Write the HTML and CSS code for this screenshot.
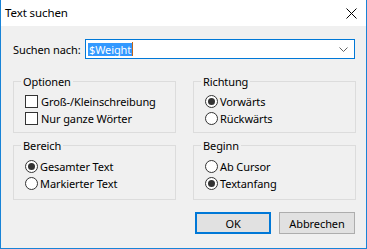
FILE: index.html
```html
<!DOCTYPE html>
<html>
<head>
<meta charset="utf-8">
<link rel="stylesheet" href="styles.css">
</head>
<body>
<div class="window">
  <div class="titlebar">
    <span class="title">Text suchen</span>
    <svg class="close" width="11" height="11" viewBox="0 0 11 11"><path d="M0.5 0.5 L10.5 10.5 M10.5 0.5 L0.5 10.5" stroke="#000" stroke-width="1" fill="none"/></svg>
  </div>
  <div class="content">
    <div class="search-row">
      <span class="label">Suchen nach:</span>
      <div class="combo">
        <span class="sel">$Weight</span><span class="caret"></span>
        <svg class="chev" width="9" height="5" viewBox="0 0 9 5"><path d="M0.5 0.5 L4.5 4.5 L8.5 0.5" stroke="#606060" stroke-width="1" fill="none"/></svg>
      </div>
    </div>
    <div class="groups">
      <fieldset class="group">
        <legend>Optionen</legend>
        <div class="opt"><span class="check"></span>Groß-/Kleinschreibung</div>
        <div class="opt"><span class="check"></span>Nur ganze Wörter</div>
      </fieldset>
      <fieldset class="group">
        <legend>Richtung</legend>
        <div class="opt"><span class="radio on"></span>Vorwärts</div>
        <div class="opt"><span class="radio"></span>Rückwärts</div>
      </fieldset>
      <fieldset class="group low">
        <legend>Bereich</legend>
        <div class="opt"><span class="radio on"></span>Gesamter Text</div>
        <div class="opt"><span class="radio"></span>Markierter Text</div>
      </fieldset>
      <fieldset class="group low">
        <legend>Beginn</legend>
        <div class="opt"><span class="radio"></span>Ab Cursor</div>
        <div class="opt"><span class="radio on"></span>Textanfang</div>
      </fieldset>
    </div>
    <div class="buttons">
      <button class="btn default">OK</button>
      <button class="btn">Abbrechen</button>
    </div>
  </div>
</div>
</body>
</html>
```
FILE: styles.css
```css
* { box-sizing: border-box; }
html, body { margin: 0; padding: 0; }
body {
  font-family: "Noto Sans", "DejaVu Sans", sans-serif;
  font-size: 11px;
  letter-spacing: -0.1px;
  color: #000;
  background: #fff;
}
.window {
  width: 367px;
  height: 249px;
  background: #f0f0f0;
  border: 1px solid #1883d7;
  border-top: none;
  display: flex;
  flex-direction: column;
}
.titlebar {
  height: 26px;
  background: #fff;
  display: flex;
  align-items: center;
  justify-content: space-between;
  padding: 0 9px 0 4px;
}
.title {
  font-size: 11.5px;
  line-height: 16px;
}
.close { display: block; margin-top: 1px; }
.content {
  padding: 13px 11px 0 12px;
  display: flex;
  flex-direction: column;
}
.search-row {
  display: flex;
  align-items: center;
  height: 20px;
}
.label {
  width: 72px;
  flex: none;
  white-space: nowrap;
  line-height: 15px;
}
.combo {
  flex: 1;
  height: 20px;
  border: 1px solid #0078d7;
  background: #fff;
  display: flex;
  align-items: center;
  padding-left: 2px;
}
.sel {
  background: #3399ff;
  color: #fff;
  line-height: 13px;
  height: 13px;
  padding: 0 1px;
}
.caret {
  width: 1px;
  height: 14px;
  background: #c0661a;
}
.chev {
  margin-left: auto;
  margin-right: 6px;
  display: block;
}
.groups {
  margin-top: 15px;
  display: grid;
  grid-template-columns: 163px 163px;
  column-gap: 17px;
  row-gap: 5px;
}
.group {
  margin: 0;
  border: 1px solid #dcdcdc;
  padding: 4px 0 5px 11px;
  min-width: 0;
}
.group.low { padding-top: 5px; padding-bottom: 7px; }
.group legend {
  padding: 0 2px;
  margin-left: -4px;
  line-height: 15px;
}
.opt {
  display: flex;
  align-items: center;
  height: 17px;
  line-height: 15px;
  white-space: nowrap;
}
.check {
  width: 13px;
  height: 13px;
  border: 1px solid #333;
  background: #fff;
  margin-right: 3px;
  flex: none;
}
.radio {
  width: 13px;
  height: 13px;
  border: 1px solid #333;
  border-radius: 50%;
  background: #fff;
  margin-right: 2px;
  flex: none;
  display: flex;
  align-items: center;
  justify-content: center;
}
.radio.on::after {
  content: "";
  width: 7px;
  height: 7px;
  border-radius: 50%;
  background: #333;
}
.buttons {
  margin-top: 12px;
  display: flex;
  justify-content: flex-end;
  gap: 8px;
}
.btn {
  width: 76px;
  height: 22px;
  font-family: inherit;
  font-size: 11px;
  letter-spacing: -0.1px;
  color: #000;
  background: #e1e1e1;
  border: 1px solid #adadad;
  padding: 0;
  line-height: 15px;
}
.btn.default {
  border: 2px solid #0078d7;
}
```
